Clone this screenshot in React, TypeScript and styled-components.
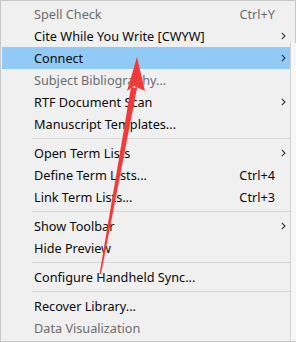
import React from "react";
import styled, { createGlobalStyle } from "styled-components";

const Global = createGlobalStyle`
  html, body { margin: 0; padding: 0; background: #f0f0f0; }
  body { width: 296px; height: 342px; overflow: hidden; }
`;

const Menu = styled.div`
  position: relative;
  box-sizing: border-box;
  width: 296px;
  height: 342px;
  background: #f0f0f0;
  border: 1px solid #c9c9c9;
  padding: 2px 5px 0 1px;
  font-family: "Noto Sans", "Liberation Sans", sans-serif;
  font-size: 12.7px;
`;

const Row = styled.div<{ $active?: boolean; $disabled?: boolean }>`
  display: grid;
  grid-template-columns: 1fr auto 15px;
  align-items: center;
  height: 22px;
  padding-left: 32px;
  background: ${(p) => (p.$active ? "#91c9f7" : "transparent")};
  color: ${(p) => (p.$disabled ? "#6d6d6d" : "#0a0a0a")};
  white-space: nowrap;
`;

const Label = styled.span``;

const Shortcut = styled.span`
  text-align: right;
`;

const ArrowCell = styled.span`
  display: flex;
  align-items: center;
  justify-content: center;
  padding-left: 2px;
`;

const Separator = styled.div`
  height: 7px;
  display: flex;
  align-items: center;
  padding-left: 30px;
  &::after {
    content: "";
    display: block;
    flex: 1;
    height: 1px;
    background: #d7d7d7;
  }
`;

const SideStrip = styled.div`
  position: absolute;
  left: 289px;
  top: 42px;
  bottom: 0;
  width: 5px;
  background: #f7f7f7;
  border-left: 1px solid #d3d3d3;
`;

const Overlay = styled.svg`
  position: absolute;
  left: -1px;
  top: -1px;
  pointer-events: none;
`;

const Chevron = () => (
  <svg width="5" height="8" viewBox="0 0 5 8">
    <path d="M0.8 0.8 L4 4 L0.8 7.2" fill="none" stroke="#333" strokeWidth="1.1" />
  </svg>
);

type Item =
  | { sep: true }
  | { sep?: false; label: string; shortcut?: string; sub?: boolean; disabled?: boolean; active?: boolean };

const items: Item[] = [
  { label: "Spell Check", shortcut: "Ctrl+Y", disabled: true },
  { label: "Cite While You Write [CWYW]", sub: true },
  { label: "Connect", sub: true, active: true },
  { label: "Subject Bibliography...", disabled: true },
  { label: "RTF Document Scan", sub: true },
  { label: "Manuscript Templates..." },
  { sep: true },
  { label: "Open Term Lists", sub: true },
  { label: "Define Term Lists...", shortcut: "Ctrl+4" },
  { label: "Link Term Lists...", shortcut: "Ctrl+3" },
  { sep: true },
  { label: "Show Toolbar", sub: true },
  { label: "Hide Preview" },
  { sep: true },
  { label: "Configure Handheld Sync..." },
  { sep: true },
  { label: "Recover Library..." },
  { label: "Data Visualization", disabled: true },
];

export default function App() {
  return (
    <>
      <Global />
      <Menu>
        <SideStrip />
        {items.map((it, i) =>
          it.sep ? (
            <Separator key={i} />
          ) : (
            <Row key={i} $active={it.active} $disabled={it.disabled}>
              <Label>{it.label}</Label>
              <Shortcut>{it.shortcut ?? ""}</Shortcut>
              <ArrowCell>{it.sub ? <Chevron /> : null}</ArrowCell>
            </Row>
          )
        )}
        <Overlay width="296" height="342" viewBox="0 0 296 342">
          <polygon points="131,87 137,88 101,274 99.5,274" fill="#f23a3a" />
          <polygon points="137,57 145,91 134,86 127,91" fill="#f23a3a" />
        </Overlay>
      </Menu>
    </>
  );
}
